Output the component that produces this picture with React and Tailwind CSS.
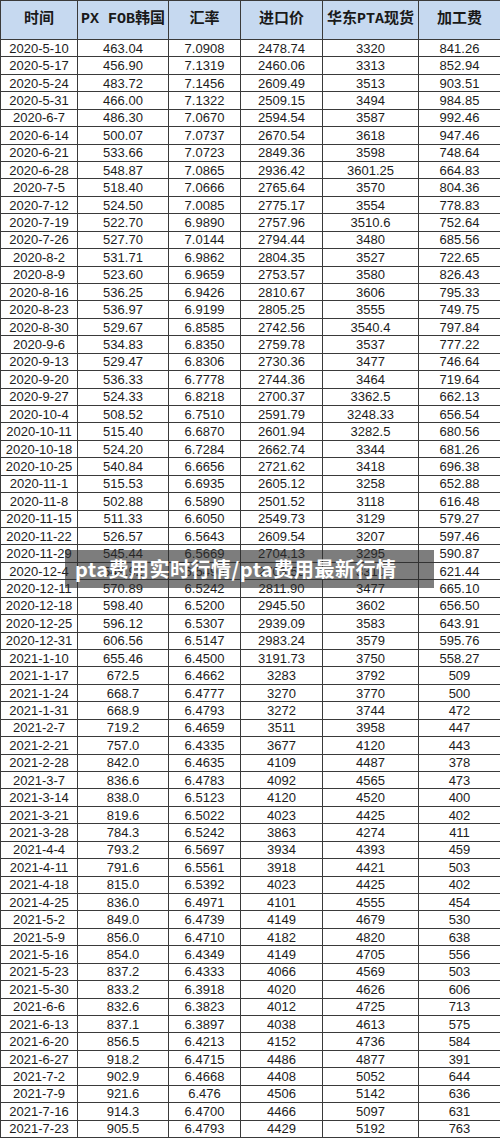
import React from "react";

const headers = ["时间", "PX FOB韩国", "汇率", "进口价", "华东PTA现货", "加工费"];

const rows = [
  ["2020-5-10", "463.04", "7.0908", "2478.74", "3320", "841.26"],
  ["2020-5-17", "456.90", "7.1319", "2460.06", "3313", "852.94"],
  ["2020-5-24", "483.72", "7.1456", "2609.49", "3513", "903.51"],
  ["2020-5-31", "466.00", "7.1322", "2509.15", "3494", "984.85"],
  ["2020-6-7", "486.30", "7.0670", "2594.54", "3587", "992.46"],
  ["2020-6-14", "500.07", "7.0737", "2670.54", "3618", "947.46"],
  ["2020-6-21", "533.66", "7.0723", "2849.36", "3598", "748.64"],
  ["2020-6-28", "548.87", "7.0865", "2936.42", "3601.25", "664.83"],
  ["2020-7-5", "518.40", "7.0666", "2765.64", "3570", "804.36"],
  ["2020-7-12", "524.50", "7.0085", "2775.17", "3554", "778.83"],
  ["2020-7-19", "522.70", "6.9890", "2757.96", "3510.6", "752.64"],
  ["2020-7-26", "527.70", "7.0144", "2794.44", "3480", "685.56"],
  ["2020-8-2", "531.71", "6.9862", "2804.35", "3527", "722.65"],
  ["2020-8-9", "523.60", "6.9659", "2753.57", "3580", "826.43"],
  ["2020-8-16", "536.25", "6.9426", "2810.67", "3606", "795.33"],
  ["2020-8-23", "536.97", "6.9199", "2805.25", "3555", "749.75"],
  ["2020-8-30", "529.67", "6.8585", "2742.56", "3540.4", "797.84"],
  ["2020-9-6", "534.83", "6.8350", "2759.78", "3537", "777.22"],
  ["2020-9-13", "529.47", "6.8306", "2730.36", "3477", "746.64"],
  ["2020-9-20", "536.33", "6.7778", "2744.36", "3464", "719.64"],
  ["2020-9-27", "524.33", "6.8218", "2700.37", "3362.5", "662.13"],
  ["2020-10-4", "508.52", "6.7510", "2591.79", "3248.33", "656.54"],
  ["2020-10-11", "515.40", "6.6870", "2601.94", "3282.5", "680.56"],
  ["2020-10-18", "524.20", "6.7284", "2662.74", "3344", "681.26"],
  ["2020-10-25", "540.84", "6.6656", "2721.62", "3418", "696.38"],
  ["2020-11-1", "515.53", "6.6935", "2605.12", "3258", "652.88"],
  ["2020-11-8", "502.88", "6.5890", "2501.52", "3118", "616.48"],
  ["2020-11-15", "511.33", "6.6050", "2549.73", "3129", "579.27"],
  ["2020-11-22", "526.57", "6.5643", "2609.54", "3207", "597.46"],
  ["2020-11-29", "545.44", "6.5669", "2704.13", "3295", "590.87"],
  ["2020-12-4", "549.92", "6.5490", "2703.53", "3310", "621.44"],
  ["2020-12-11", "570.89", "6.5242", "2811.90", "3477", "665.10"],
  ["2020-12-18", "598.40", "6.5200", "2945.50", "3602", "656.50"],
  ["2020-12-25", "596.12", "6.5307", "2939.09", "3583", "643.91"],
  ["2020-12-31", "606.56", "6.5147", "2983.24", "3579", "595.76"],
  ["2021-1-10", "655.46", "6.4500", "3191.73", "3750", "558.27"],
  ["2021-1-17", "672.5", "6.4662", "3283", "3792", "509"],
  ["2021-1-24", "668.7", "6.4777", "3270", "3770", "500"],
  ["2021-1-31", "668.9", "6.4793", "3272", "3744", "472"],
  ["2021-2-7", "719.2", "6.4659", "3511", "3958", "447"],
  ["2021-2-21", "757.0", "6.4335", "3677", "4120", "443"],
  ["2021-2-28", "842.0", "6.4635", "4109", "4487", "378"],
  ["2021-3-7", "836.6", "6.4783", "4092", "4565", "473"],
  ["2021-3-14", "838.0", "6.5123", "4120", "4520", "400"],
  ["2021-3-21", "819.6", "6.5022", "4023", "4425", "402"],
  ["2021-3-28", "784.3", "6.5242", "3863", "4274", "411"],
  ["2021-4-4", "793.2", "6.5697", "3934", "4393", "459"],
  ["2021-4-11", "791.6", "6.5561", "3918", "4421", "503"],
  ["2021-4-18", "815.0", "6.5392", "4023", "4425", "402"],
  ["2021-4-25", "836.0", "6.4971", "4101", "4555", "454"],
  ["2021-5-2", "849.0", "6.4739", "4149", "4679", "530"],
  ["2021-5-9", "856.0", "6.4710", "4182", "4820", "638"],
  ["2021-5-16", "854.0", "6.4349", "4149", "4705", "556"],
  ["2021-5-23", "837.2", "6.4333", "4066", "4569", "503"],
  ["2021-5-30", "833.2", "6.3918", "4020", "4626", "606"],
  ["2021-6-6", "832.6", "6.3823", "4012", "4725", "713"],
  ["2021-6-13", "837.1", "6.3897", "4038", "4613", "575"],
  ["2021-6-20", "856.5", "6.4213", "4152", "4736", "584"],
  ["2021-6-27", "918.2", "6.4715", "4486", "4877", "391"],
  ["2021-7-2", "902.9", "6.4668", "4408", "5052", "644"],
  ["2021-7-9", "921.6", "6.476", "4506", "5142", "636"],
  ["2021-7-16", "914.3", "6.4700", "4466", "5097", "631"],
  ["2021-7-23", "905.5", "6.4793", "4429", "5192", "763"],
];

const App = () => {
  return (
    <div className="relative w-[500px] h-[1139px] bg-white overflow-hidden">
      {/* table */}
      <div className="grid grid-cols-[77px_91px_72px_82px_96px_82px] grid-rows-[39px_repeat(63,minmax(0,1fr))] h-[1138px] border-t border-l border-[#3a3a3a]">
        {headers.map((h) => (
          <div
            key={h}
            className="flex items-center justify-center bg-[#c6d9f0] border-r border-b border-[#3a3a3a] text-[15px] font-bold text-[#1a1a1a] font-['Liberation_Mono','Noto_Sans_CJK_SC',monospace]"
          >
            {h}
          </div>
        ))}
        {rows.map((row, i) =>
          row.map((cell, j) => (
            <div
              key={i + "-" + j}
              className="flex items-center justify-center border-r border-b border-[#3a3a3a] text-[13px] leading-none text-[#1c1c1c] font-['Liberation_Sans',Arial,sans-serif]"
            >
              {cell}
            </div>
          ))
        )}
      </div>

      {/* watermark caption */}
      <div className="absolute left-[65px] top-[550px] w-[369px] h-[38px] bg-[rgba(45,45,45,0.62)] flex items-center pl-[10px]">
        <span className="text-white text-[20px] font-bold tracking-[0.5px] font-['Noto_Sans_CJK_SC','Noto_Sans',sans-serif]">
          pta费用实时行情/pta费用最新行情
        </span>
      </div>
    </div>
  );
};

export default App;
